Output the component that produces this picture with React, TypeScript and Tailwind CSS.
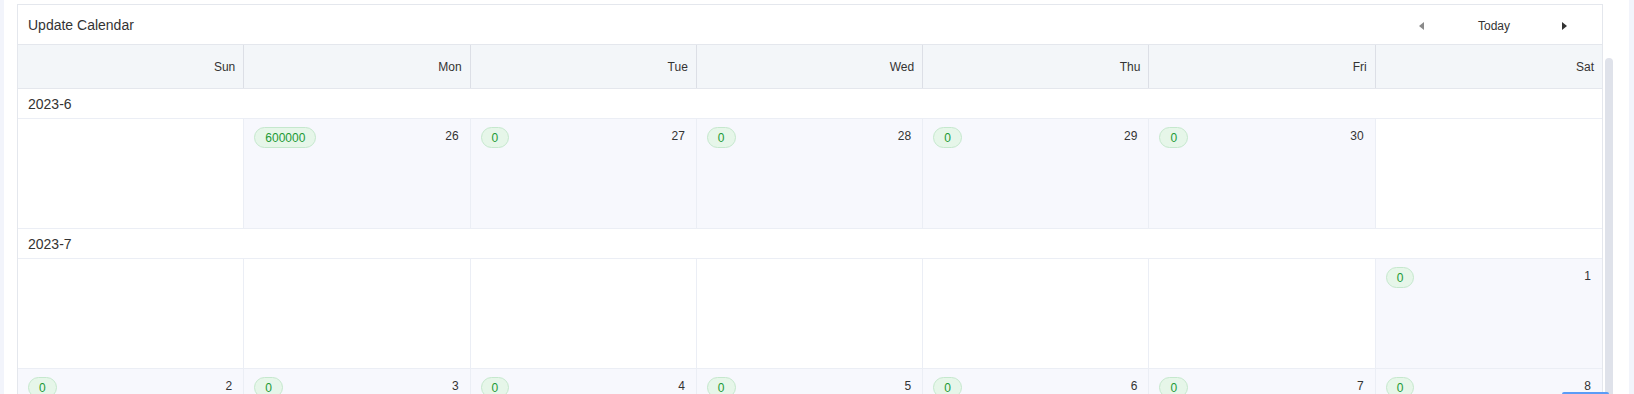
import React from "react";

type Cell = { day?: number; value?: string };

const weekdays = ["Sun", "Mon", "Tue", "Wed", "Thu", "Fri", "Sat"];

const sections: { label: string; weeks: Cell[][] }[] = [
  {
    label: "2023-6",
    weeks: [
      [
        {},
        { day: 26, value: "600000" },
        { day: 27, value: "0" },
        { day: 28, value: "0" },
        { day: 29, value: "0" },
        { day: 30, value: "0" },
        {},
      ],
    ],
  },
  {
    label: "2023-7",
    weeks: [
      [{}, {}, {}, {}, {}, {}, { day: 1, value: "0" }],
      [
        { day: 2, value: "0" },
        { day: 3, value: "0" },
        { day: 4, value: "0" },
        { day: 5, value: "0" },
        { day: 6, value: "0" },
        { day: 7, value: "0" },
        { day: 8, value: "0" },
      ],
    ],
  },
];

function DayCell({ cell, last }: { cell: Cell; last: boolean }) {
  const active = cell.day !== undefined;
  return (
    <div
      className={`h-[109px] ${last ? "" : "border-r border-[#ebeef5]"} ${
        active ? "bg-[#f7f8fd]" : "bg-white"
      }`}
    >
      {active && (
        <div className="flex items-start justify-between pl-[10px] pr-[11px] pt-[8px]">
          <span className="rounded-full border border-[#c5e8cd] bg-[#e6f6e9] px-[10px] pt-[1px] text-[12px] leading-[18px] text-[#1c9a36]">
            {cell.value}
          </span>
          <span className="pt-[1px] text-[12px] leading-[16px] text-[#333]">{cell.day}</span>
        </div>
      )}
    </div>
  );
}

export default function App() {
  return (
    <div
      className="relative h-[394px] w-[1634px] overflow-hidden bg-white"
      style={{ fontFamily: '"Liberation Sans", Arial, sans-serif' }}
    >
      <div className="flex h-full">
        <div className="h-full w-[4px] bg-[#f2f4fb]" />
        <div className="ml-[13px] mt-[4px] w-[1586px]">
          <div className="border border-[#e4e7ed] bg-white">
            <div className="flex h-[40px] items-center justify-between border-b border-[#e4e7ed] pl-[10px] pr-[34px] pt-[2px]">
              <span className="text-[14px] text-[#333]">Update Calendar</span>
              <div className="flex items-center">
                <svg width="6" height="8" viewBox="0 0 6 8">
                  <polygon points="6,0 6,8 1,4" fill="#8a8a8a" />
                </svg>
                <span className="ml-[54px] mr-[52px] text-[12px] text-[#333]">Today</span>
                <svg width="6" height="8" viewBox="0 0 6 8">
                  <polygon points="0,0 0,8 5,4" fill="#333" />
                </svg>
              </div>
            </div>
            <div className="grid grid-cols-7 border-b border-[#e4e7ed] bg-[#f3f6f9]">
              {weekdays.map((d, i) => (
                <div
                  key={d}
                  className={`flex h-[43px] items-center justify-end pr-[8px] pt-[1px] text-[12px] text-[#333] ${
                    i < 6 ? "border-r border-[#dcdfe6]" : ""
                  }`}
                >
                  {d}
                </div>
              ))}
            </div>
            {sections.map((s) => (
              <div key={s.label}>
                <div className="flex h-[30px] items-center border-b border-[#ebeef5] pl-[10px] pt-[2px] text-[14px] text-[#333]">
                  {s.label}
                </div>
                {s.weeks.map((w, wi) => (
                  <div key={wi} className="grid grid-cols-7 border-b border-[#ebeef5]">
                    {w.map((c, ci) => (
                      <DayCell key={ci} cell={c} last={ci === 6} />
                    ))}
                  </div>
                ))}
              </div>
            ))}
          </div>
        </div>
      </div>
      <div className="absolute left-[1605px] top-[58px] h-[340px] w-[8px] rounded-t-full bg-[#dfe2ea]" />
      <div className="absolute right-0 top-0 h-full w-[5px] bg-[#f2f4fb]" />
      <div className="absolute left-[1562px] top-[392px] h-[4px] w-[47px] rounded-t-[2px] bg-[#5b9cf7]" />
    </div>
  );
}
